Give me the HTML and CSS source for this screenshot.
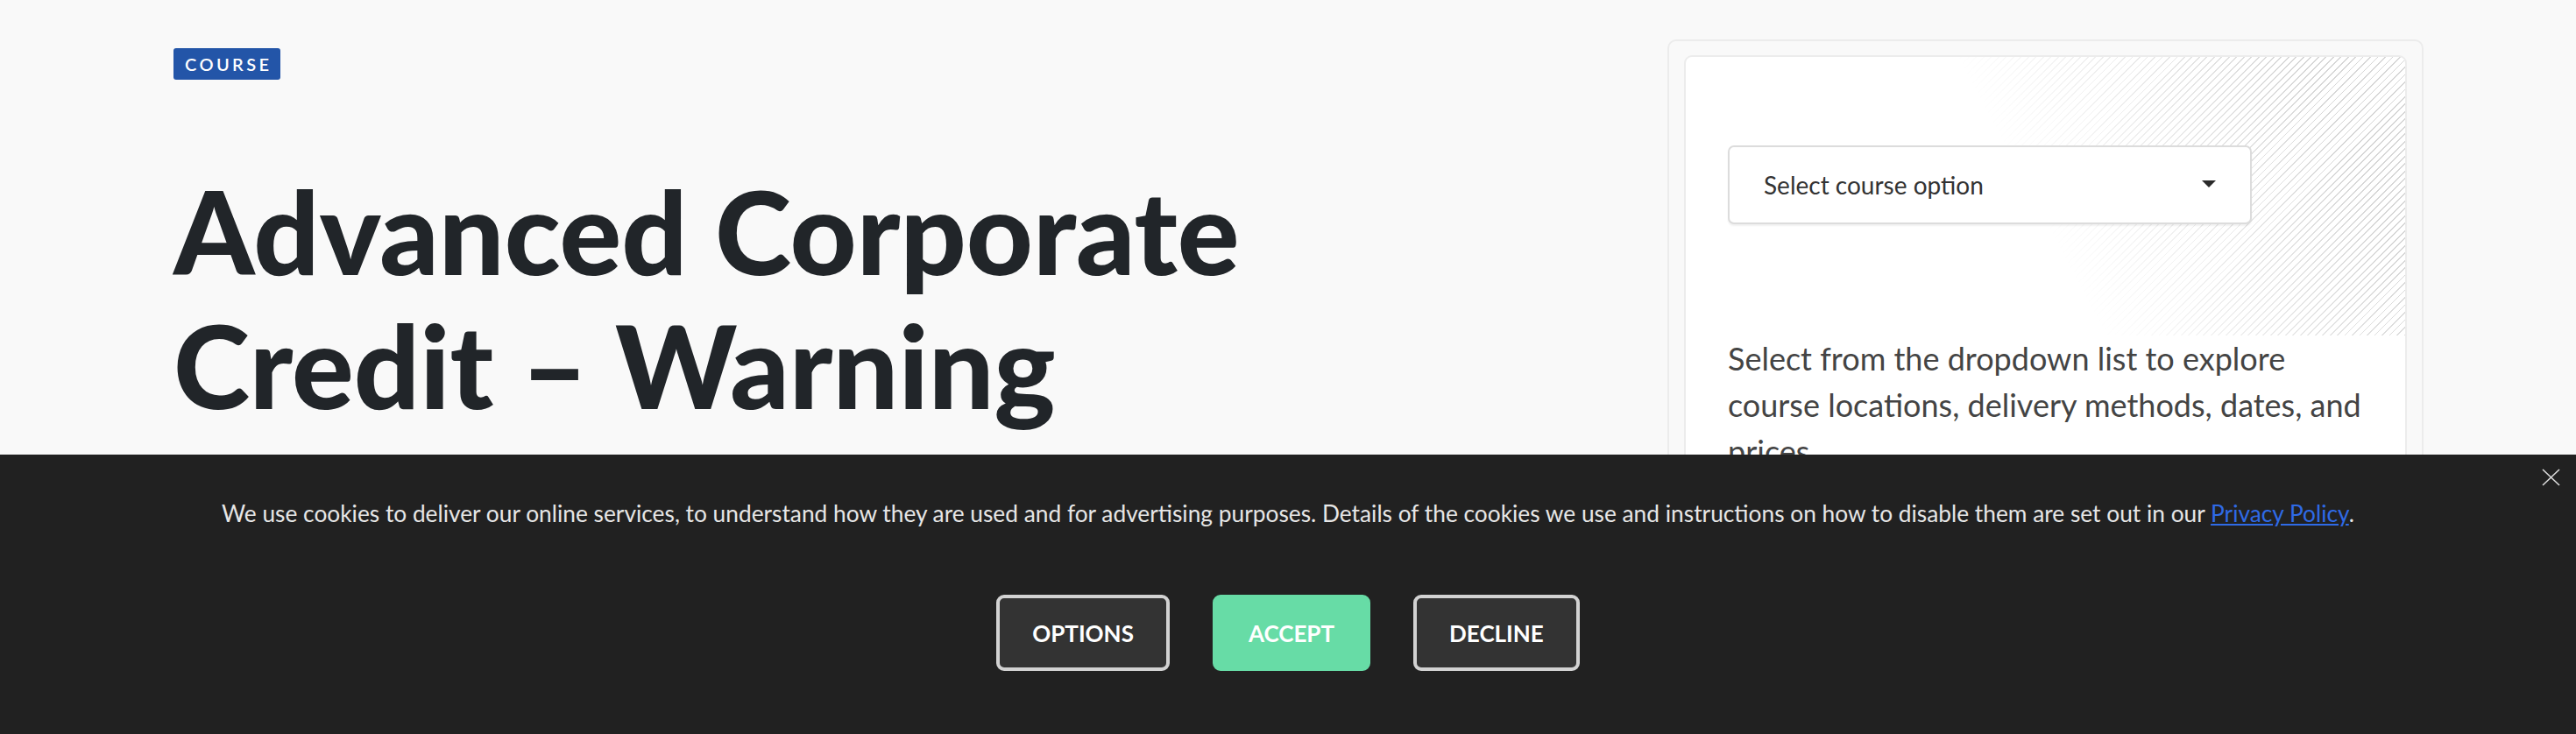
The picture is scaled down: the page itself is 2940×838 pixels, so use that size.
FILE: index.html
```html
<!DOCTYPE html>
<html lang="en">
<head>
<meta charset="utf-8">
<title>Advanced Corporate Credit – Warning</title>
<link rel="stylesheet" href="styles.css">
</head>
<body>
<main class="page">
  <section class="intro">
    <span class="badge">COURSE</span>
    <h1 class="title">Advanced Corporate Credit – Warning</h1>
  </section>
  <aside class="card-outer">
    <div class="card">
      <div class="card-top">
        <div class="select">
          <span>Select course option</span>
          <span class="caret"></span>
        </div>
      </div>
      <p class="desc">Select from the dropdown list to explore course locations, delivery methods, dates, and prices.</p>
    </div>
  </aside>
</main>

<div class="cookie">
  <button class="close" aria-label="Close">
    <svg width="21" height="20" viewBox="0 0 21 20"><path d="M1 1 L20 19 M20 1 L1 19" stroke="#dcdcdc" stroke-width="1.6" fill="none"/></svg>
  </button>
  <p class="cookie-text">We use cookies to deliver our online services, to understand how they are used and for advertising purposes. Details of the cookies we use and instructions on how to disable them are set out in our <a href="#">Privacy Policy</a>.</p>
  <div class="cookie-actions">
    <button class="btn">OPTIONS</button>
    <button class="btn btn-accept">ACCEPT</button>
    <button class="btn">DECLINE</button>
  </div>
</div>
</body>
</html>
```

FILE: styles.css
```css
html, body {
  margin: 0;
  padding: 0;
}
body {
  background: #f9f9f9;
  font-family: Lato, "Open Sans", sans-serif;
  color: #212529;
  height: 838px;
  overflow: hidden;
}
.page {
  display: flex;
  justify-content: space-between;
  align-items: flex-start;
  padding: 45px 174px 0 198px;
}
.intro {
  padding-top: 10px;
}
.badge {
  display: inline-block;
  background: #2355a8;
  color: #fff;
  font-size: 20px;
  font-weight: 600;
  letter-spacing: 3.4px;
  line-height: 36px;
  height: 36px;
  padding: 0 10px 0 13px;
  border-radius: 3px;
}
.title {
  margin: 96px 0 0;
  font-size: 132px;
  line-height: 153px;
  font-weight: 900;
  width: 1300px;
  color: #212529;
}
.card-outer {
  width: 863px;
  box-sizing: border-box;
  border: 2px solid #ececec;
  border-radius: 10px;
  padding: 16px 17px;
  height: 700px;
}
.card {
  background: #fff;
  border: 2px solid #ececec;
  border-radius: 9px;
  overflow: hidden;
  height: 660px;
}
.card-top {
  position: relative;
  padding: 101px 50px 127px 48px;
}
.card-top::before {
  content: "";
  position: absolute;
  inset: 0;
  background: repeating-linear-gradient(135deg, #d6d6d6 0 1.3px, transparent 1.3px 6px);
  -webkit-mask-image: linear-gradient(62deg, transparent 48%, #000 88%);
  mask-image: linear-gradient(62deg, transparent 48%, #000 88%);
}
.select {
  position: relative;
  z-index: 1;
  width: 598px;
  height: 90px;
  box-sizing: border-box;
  border: 2px solid #dcdcdc;
  border-radius: 7px;
  background: #fff;
  box-shadow: 0 2px 2px rgba(0,0,0,0.06);
  display: flex;
  align-items: center;
  justify-content: space-between;
  padding: 0 39px 0 39px;
  font-size: 28px;
  color: #333;
}
.caret {
  width: 0;
  height: 0;
  border-left: 8px solid transparent;
  border-right: 8px solid transparent;
  border-top: 8px solid #2a2a2a;
  margin-top: -3px;
}
.desc {
  margin: 0;
  padding: 0 50px 0 48px;
  font-size: 36px;
  line-height: 53px;
  color: #444;
}
.cookie {
  position: fixed;
  left: 0;
  right: 0;
  bottom: 0;
  height: 319px;
  background: #212121;
  padding-top: 49px;
  box-sizing: border-box;
  text-align: center;
}
.close {
  position: absolute;
  top: 16px;
  right: 18px;
  width: 21px;
  height: 20px;
  padding: 0;
  border: 0;
  background: transparent;
  display: flex;
}
.cookie-text {
  margin: 0;
  font-size: 26.3px;
  line-height: 36px;
  color: #e6e6e6;
}
.cookie-text a {
  color: #2f6ae6;
  text-decoration: underline;
}
.cookie-actions {
  margin-top: 75px;
  display: flex;
  justify-content: center;
  gap: 49px;
}
.btn {
  height: 87px;
  box-sizing: border-box;
  border: 4px solid #d2d2d2;
  border-radius: 9px;
  background: #333;
  color: #fff;
  font-family: Lato, sans-serif;
  font-size: 26px;
  font-weight: 700;
  padding: 0 37px;
}
.btn-accept {
  background: #67dca6;
  border-color: #67dca6;
}
```
